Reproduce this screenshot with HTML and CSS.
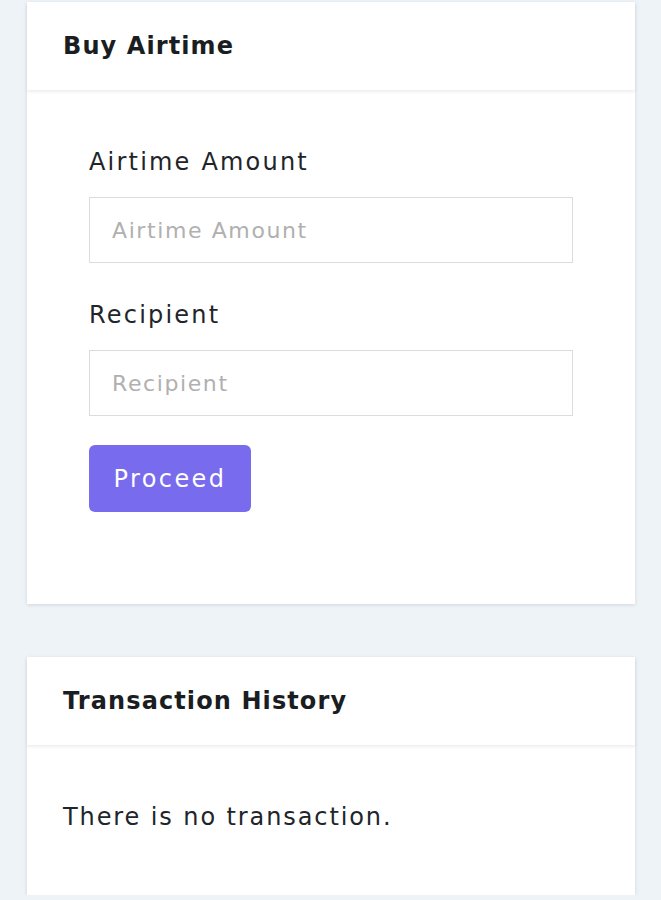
FILE: index.html
```html
<!DOCTYPE html>
<html lang="en">
<head>
<meta charset="utf-8">
<title>Buy Airtime</title>
<link rel="stylesheet" href="styles.css">
</head>
<body>
<main class="page">
  <section class="card">
    <header class="card-header"><h2 class="card-title">Buy Airtime</h2></header>
    <div class="card-body">
      <form class="form">
        <label class="field-label" for="amount">Airtime Amount</label>
        <input class="field-input" id="amount" type="text" placeholder="Airtime Amount">
        <label class="field-label second" for="recipient">Recipient</label>
        <input class="field-input" id="recipient" type="text" placeholder="Recipient">
        <button class="btn" type="button">Proceed</button>
      </form>
    </div>
  </section>
  <section class="card">
    <header class="card-header"><h2 class="card-title">Transaction History</h2></header>
    <div class="card-body history">
      <p class="empty">There is no transaction.</p>
    </div>
  </section>
</main>
</body>
</html>
```

FILE: styles.css
```css
html, body {
  margin: 0;
  padding: 0;
  background: #eef3f8;
  font-family: "DejaVu Sans", "Open Sans", sans-serif;
  color: #212529;
}
.page {
  padding: 2px 26px 0 27px;
  display: flex;
  flex-direction: column;
  gap: 53px;
}
.card {
  background: #fff;
  box-shadow: 0 1px 4px rgba(0, 0, 0, 0.12);
}
.card-header {
  height: 88px;
  display: flex;
  align-items: center;
  padding: 0 36px;
  box-shadow: 0 2px 3px rgba(0, 0, 0, 0.07);
  position: relative;
}
.card-title {
  margin: 0;
  font-size: 24px;
  font-weight: 700;
  letter-spacing: 1.1px;
  color: #1a1d21;
}
.card-body {
  padding: 54px 36px 92px;
}
.form {
  display: flex;
  flex-direction: column;
  align-items: flex-start;
  padding: 0 26px;
}
.field-label {
  font-size: 24px;
  line-height: 36px;
  letter-spacing: 2.2px;
  color: #212529;
}
.field-label.second {
  margin-top: 34px;
}
.field-input {
  margin-top: 17px;
  box-sizing: border-box;
  width: 100%;
  height: 66px;
  border: 1px solid #dcdcdc;
  padding: 0 22px;
  font-family: inherit;
  font-size: 22px;
  letter-spacing: 1.6px;
  color: #212529;
  outline: none;
}
.field-input::placeholder {
  color: #b0b0b0;
}
.btn {
  margin-top: 29px;
  width: 162px;
  height: 67px;
  border: none;
  border-radius: 6px;
  background: #786bed;
  color: #fff;
  font-family: inherit;
  font-size: 24px;
  letter-spacing: 2.4px;
  cursor: pointer;
}
.history {
  padding: 54px 36px 60px;
}
.empty {
  margin: 0;
  font-size: 24px;
  line-height: 36px;
  letter-spacing: 1.9px;
}
```
